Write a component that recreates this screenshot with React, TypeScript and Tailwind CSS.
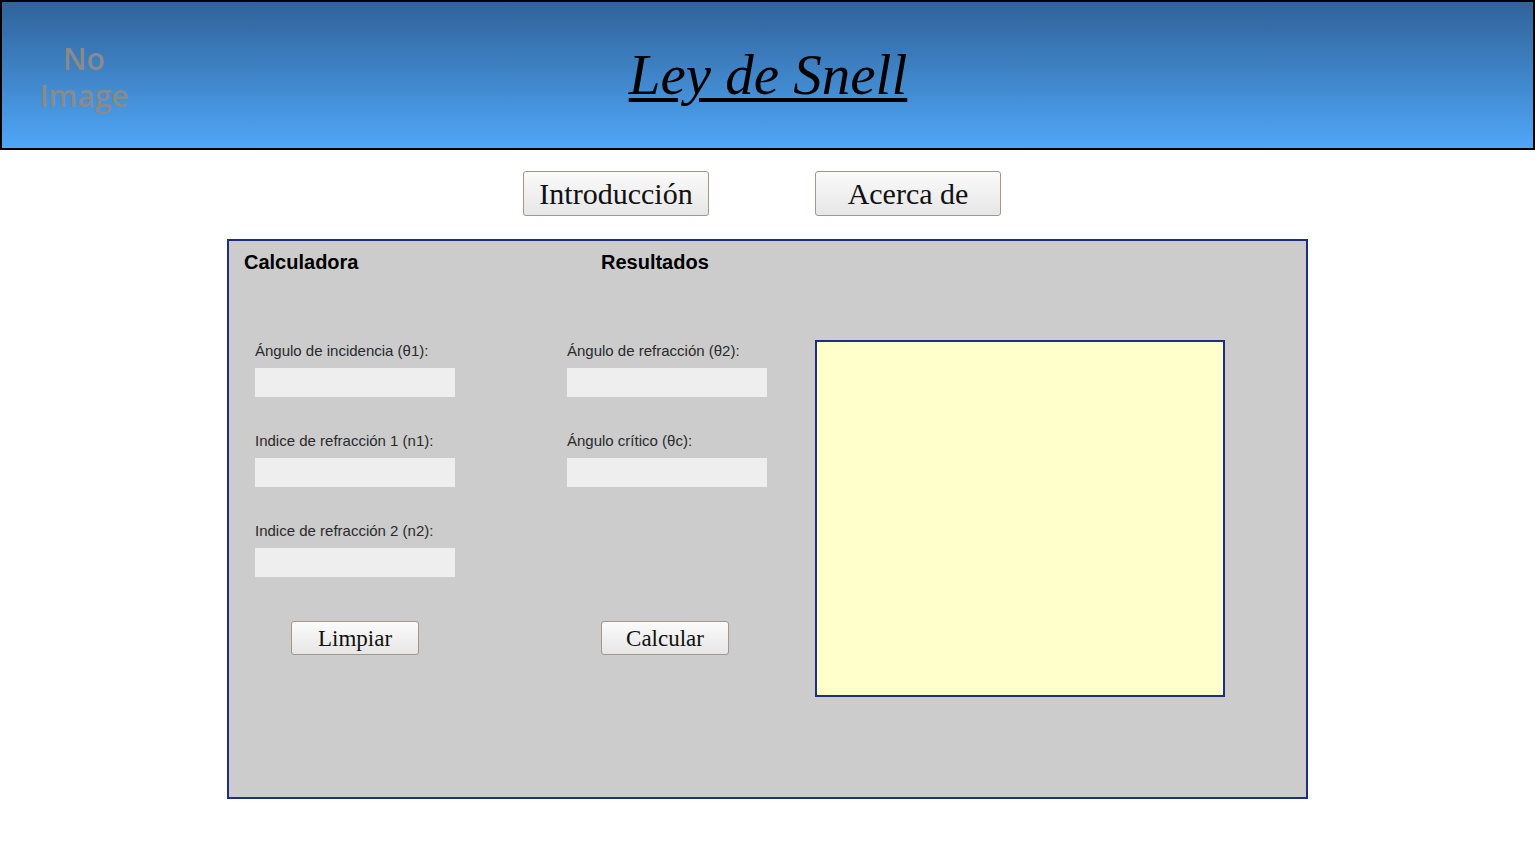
export default function App() {
    return (
        <div className="min-h-screen bg-white">
            <header className="grid h-[150px] grid-cols-[1fr_auto_1fr] items-center border-2 border-black bg-gradient-to-b from-[#30639a] to-[#4fa7f8]">
                <div className="flex items-center">
                    <div className="ml-[15px] mt-[4px] w-[134px] text-center font-['Open_Sans',sans-serif] text-[30px] font-semibold leading-[37px] text-[#8a8a8a]">
                        <div>No</div>
                        <div>Image</div>
                    </div>
                </div>
                <h1 className="pb-[2px] pl-[1px] font-['Liberation_Serif',serif] text-[57px] italic leading-none text-black underline decoration-[4px] underline-offset-[4px]">
                    Ley de Snell
                </h1>
                <div />
            </header>

            <nav className="mt-[21px] flex justify-center gap-[106px] pr-[11px]">
                <button className="h-[45px] w-[186px] rounded-[3px] border border-[#a3968b] bg-gradient-to-b from-[#fbfbfb] to-[#e6e6e6] font-['Liberation_Serif',serif] text-[30px] leading-none text-[#111]">
                    Introducción
                </button>
                <button className="h-[45px] w-[186px] rounded-[3px] border border-[#a3968b] bg-gradient-to-b from-[#fbfbfb] to-[#e6e6e6] font-['Liberation_Serif',serif] text-[30px] leading-none text-[#111]">
                    Acerca de
                </button>
            </nav>

            <main className="ml-[227px] mt-[23px] h-[560px] w-[1081px] border-2 border-[#1d2f83] bg-[#cccccc] font-['Liberation_Sans',Arial,sans-serif]">
                <div className="flex pt-[10px] text-[20px] font-bold leading-[23px] text-black">
                    <h2 className="ml-[15px] w-[357px]">Calculadora</h2>
                    <h2>Resultados</h2>
                </div>

                <div className="mt-[66px] flex">
                    <div className="ml-[26px] w-[512px] pt-[2px]">
                        <div className="grid grid-cols-[200px_200px] gap-x-[112px] text-[15px] leading-[17px] text-[#2a2a2a]">
                            <div className="flex flex-col gap-y-[35px]">
                                <Field label="Ángulo de incidencia (θ1):" />
                                <Field label="Indice de refracción 1 (n1):" />
                                <Field label="Indice de refracción 2 (n2):" />
                            </div>
                            <div className="flex flex-col gap-y-[35px]">
                                <Field label="Ángulo de refracción (θ2):" />
                                <Field label="Ángulo crítico (θc):" />
                            </div>
                        </div>

                        <div className="mt-[44px] flex">
                            <div className="ml-[36px]">
                                <Btn text="Limpiar" />
                            </div>
                            <div className="ml-[182px]">
                                <Btn text="Calcular" />
                            </div>
                        </div>
                    </div>

                    <div className="ml-[48px] h-[357px] w-[410px] border-2 border-[#1d2f83] bg-[#ffffcc]" />
                </div>
            </main>
        </div>
    );
}

function Field({ label }: { label: string }) {
    return (
        <div className="flex flex-col gap-y-[9px]">
            <label>{label}</label>
            <input className="h-[29px] w-[200px] bg-[#eeeeee] outline-none" />
        </div>
    );
}

function Btn({ text }: { text: string }) {
    return (
        <button className="h-[34px] w-[128px] rounded-[3px] border border-[#a3968b] bg-gradient-to-b from-[#fbfbfb] to-[#e6e6e6] font-['Liberation_Serif',serif] text-[23px] leading-none text-[#111]">
            {text}
        </button>
    );
}
